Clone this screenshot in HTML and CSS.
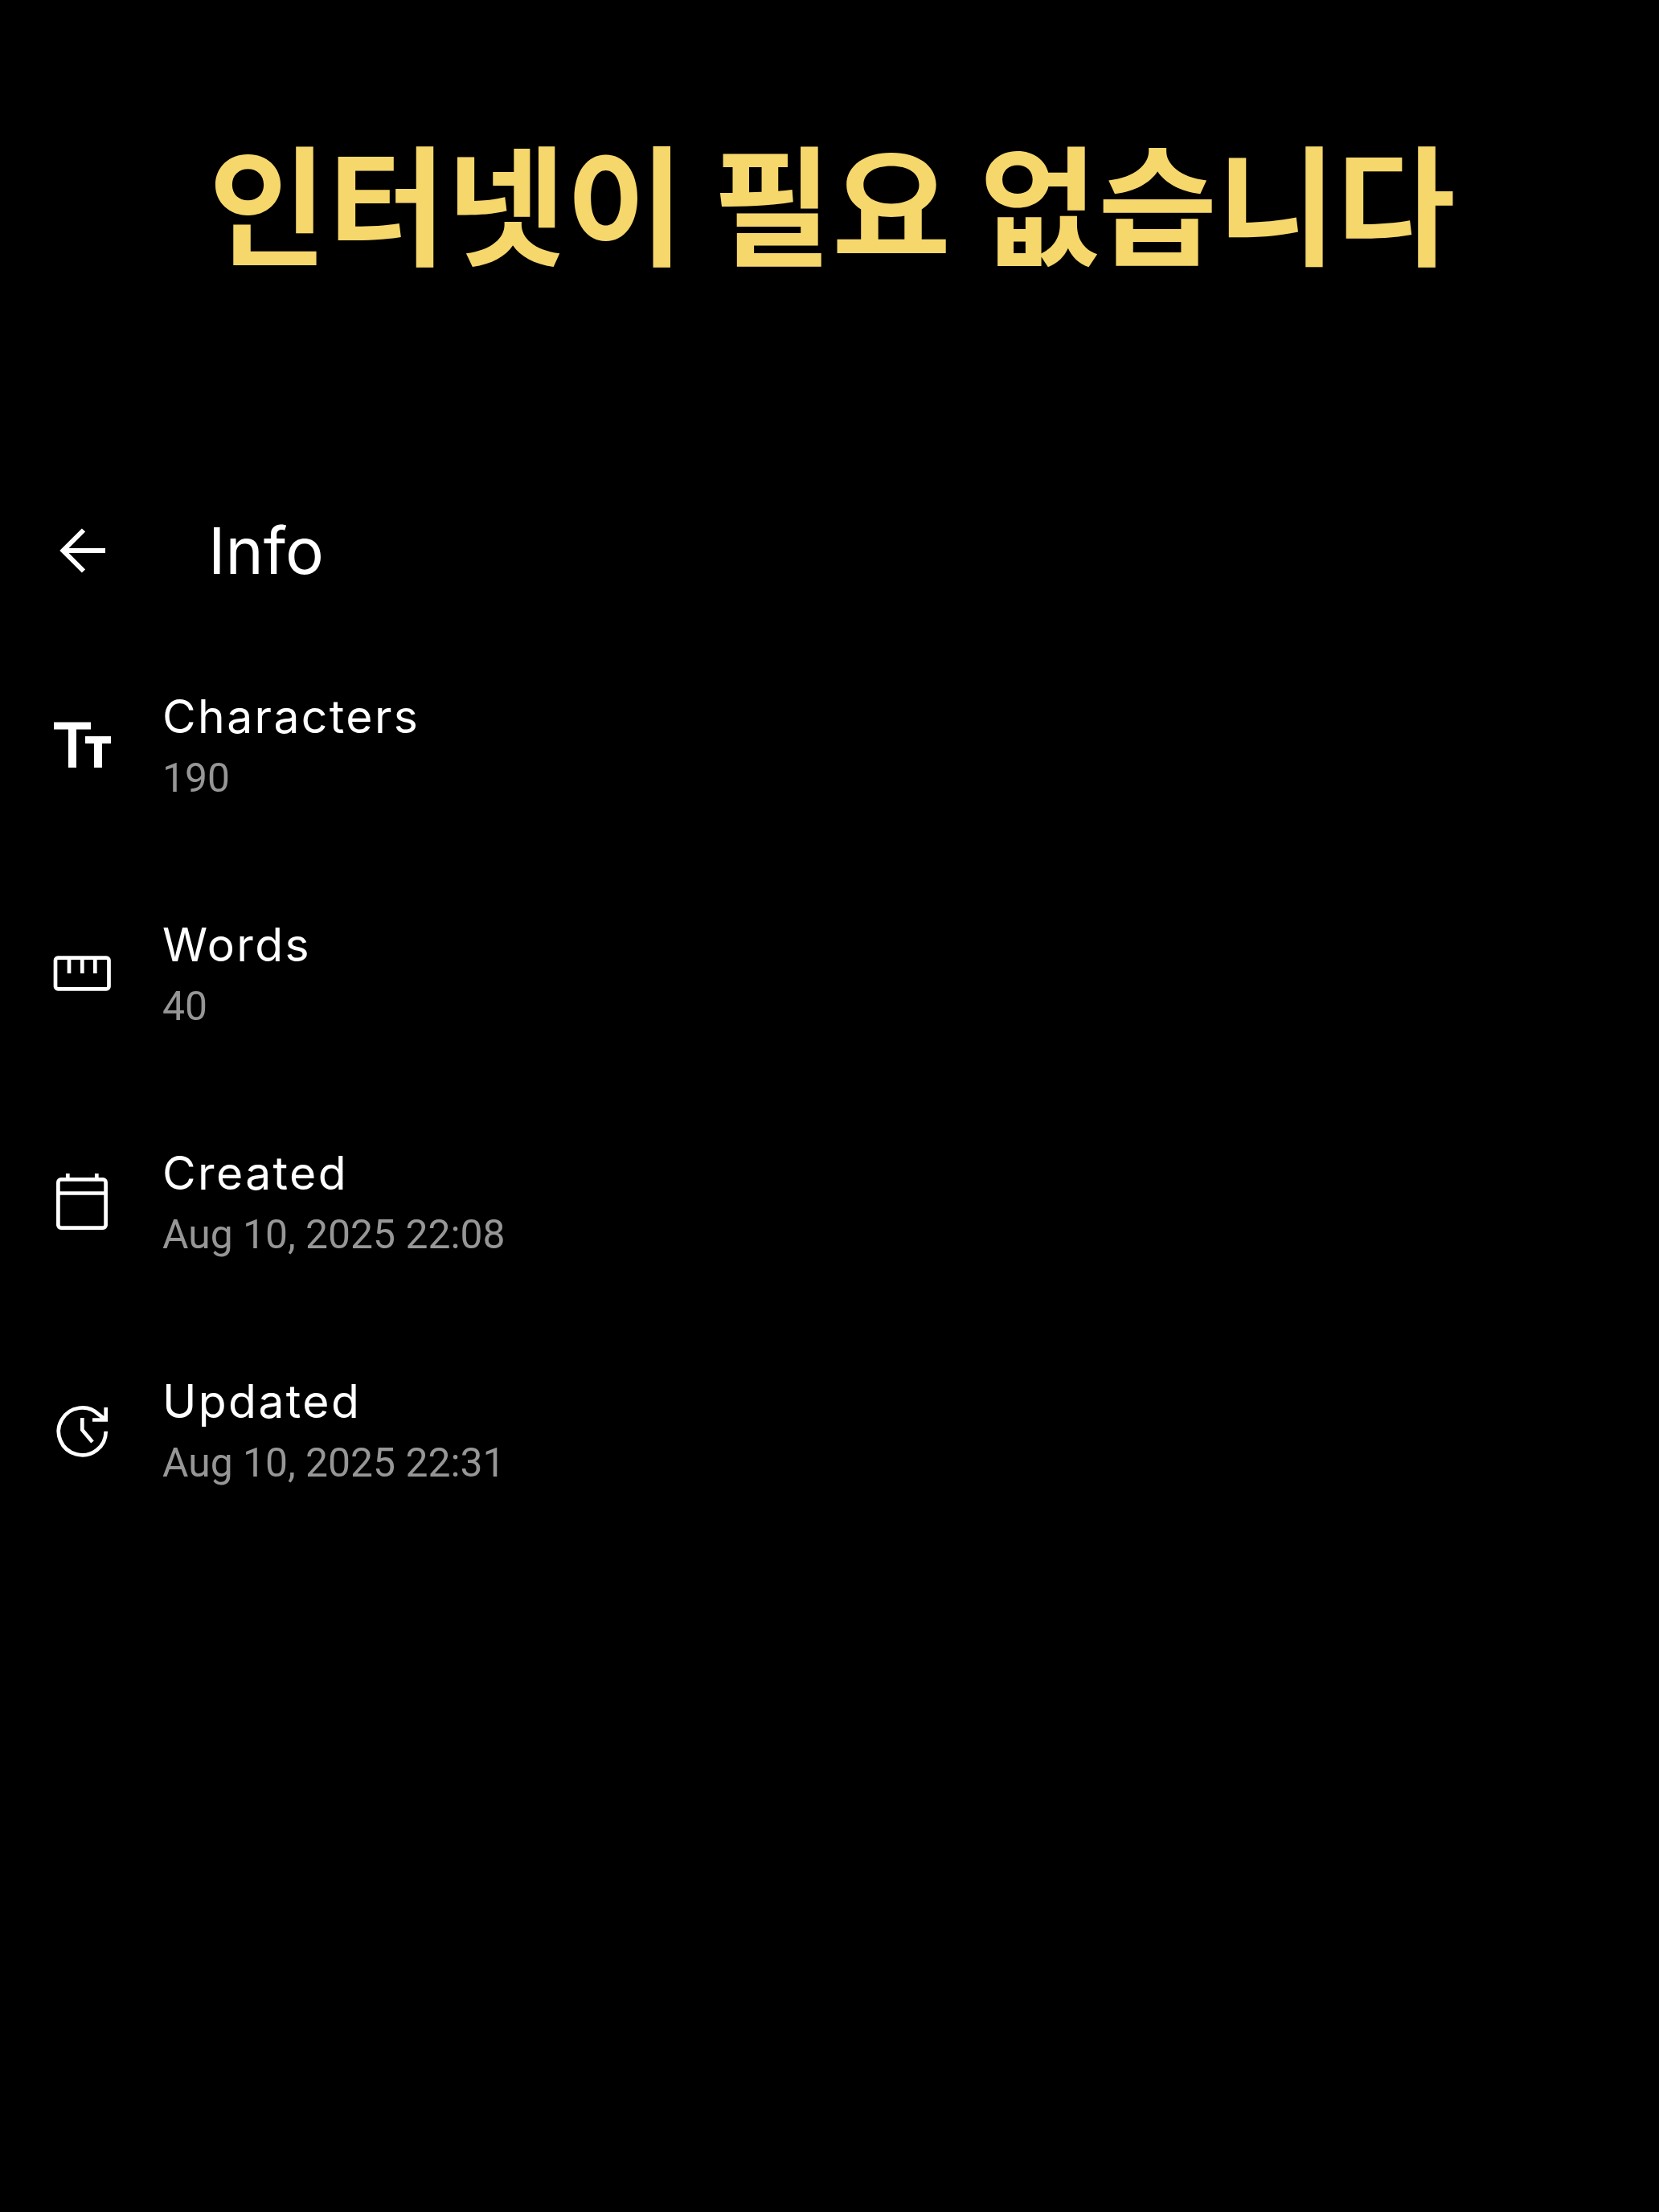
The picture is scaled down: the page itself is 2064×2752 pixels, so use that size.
FILE: index.html
```html
<!DOCTYPE html>
<html lang="ko">
<head>
    <meta charset="UTF-8">
    <title>Info</title>
    <link rel="stylesheet" href="styles.css">
</head>
<body>
    <h1 class="headline">인터넷이 필요 없습니다</h1>

    <header class="app-bar">
        <svg class="back-icon" viewBox="0 0 84 84"><path d="M71 43H18M44 17.500L18.500 43 44 68.500"/></svg>
        <span class="app-title">Info</span>
    </header>

    <ul class="info-list">
        <li class="info-row">
            <svg class="info-icon" viewBox="0 0 84 84"><path class="solid" d="M7 14.500H53V23.500H35V71H25V23.500H7zM46 32H78V41H67V71H57V41H46z"/></svg>
            <div class="info-text"><div class="info-label">Characters</div><div class="info-value">190</div></div>
        </li>
        <li class="info-row">
            <svg class="info-icon" viewBox="0 0 84 84"><rect x="9" y="23.700" width="66.500" height="38.600" rx="3"/><path d="M26 23.700V43M42.300 23.700V43M58.300 23.700V43"/></svg>
            <div class="info-text"><div class="info-label">Words</div><div class="info-value">40</div></div>
        </li>
        <li class="info-row">
            <svg class="info-icon" viewBox="0 0 84 84"><rect x="12.400" y="15.400" width="59.200" height="60.200" rx="3.500"/><path d="M12.400 32.500h59.200M24.300 8v8M60.300 8v8"/></svg>
            <div class="info-text"><div class="info-label">Created</div><div class="info-value">Aug 10, 2025 22:08</div></div>
        </li>
        <li class="info-row">
            <svg class="info-icon" viewBox="0 0 84 84"><path d="M71.700 44.700A29.400 29.400 0 1 1 63 24L71 30M71.700 15V30.500H55M42.300 28V43L55 58"/></svg>
            <div class="info-text"><div class="info-label">Updated</div><div class="info-value">Aug 10, 2025 22:31</div></div>
        </li>
    </ul>
</body>
</html>
```

FILE: styles.css
```css
* {
    margin: 0;
    padding: 0;
    box-sizing: border-box;
}

body {
    background: #000;
    color: #fff;
    font-family: 'Inter', sans-serif;
    min-height: 2752px;
}

svg {
    fill: none;
    stroke: #fff;
    stroke-width: 4.700;
}

/* Headline */
.headline {
    padding-top: 148px;
    padding-left: 6px;
    height: 600px;
    text-align: center;
    font-family: 'Noto Sans CJK KR', sans-serif;
    font-size: 161px;
    font-weight: 700;
    line-height: 200px;
    word-spacing: -10px;
    color: #F6D76B;
}

/* App bar */
.app-bar {
    display: flex;
    align-items: center;
    height: 168px;
    padding-left: 60px;
}

.back-icon {
    width: 84px;
    height: 84px;
    stroke-width: 6;
}

.app-title {
    margin-left: 115px;
    font-size: 80px;
    font-weight: 380;
}

/* Info rows */
.info-list {
    list-style: none;
    padding-top: 16px;
}

.info-row {
    display: flex;
    align-items: center;
    height: 284px;
    padding-left: 60px;
}

.info-icon {
    width: 84px;
    height: 84px;
    flex-shrink: 0;
}

.solid {
    fill: #fff;
    stroke: none;
}

.info-text {
    display: flex;
    flex-direction: column;
    gap: 4px;
    margin-left: 58px;
    padding-top: 7px;
}

.info-label {
    font-size: 57px;
    font-weight: 380;
    line-height: 72px;
    letter-spacing: 2.400px;
}

.info-value {
    font-family: 'Roboto', sans-serif;
    font-size: 49.800px;
    line-height: 72px;
    color: #969696;
}
```
